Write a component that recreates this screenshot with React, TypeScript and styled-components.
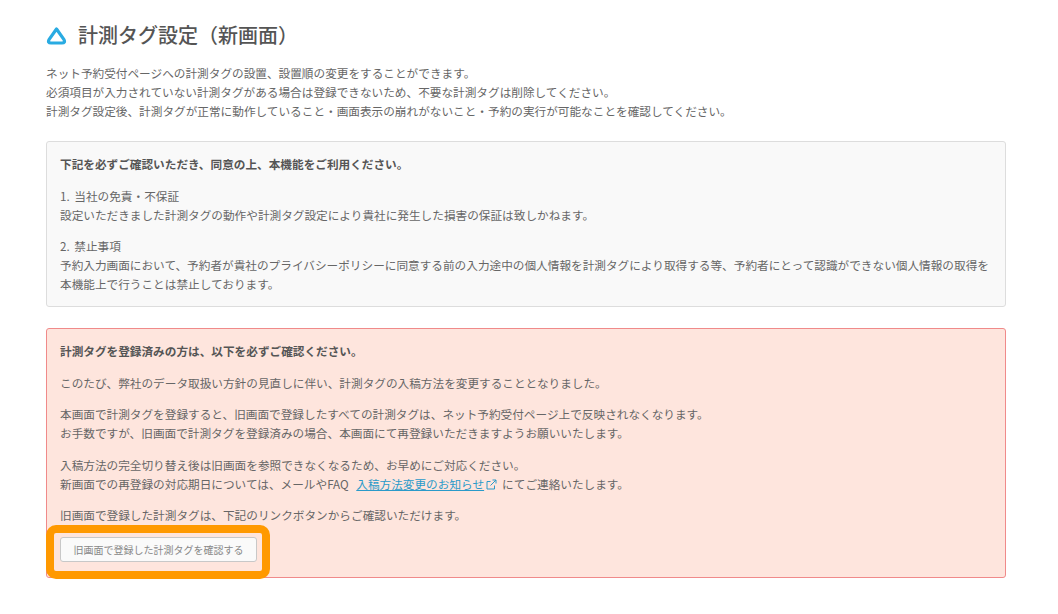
import styled, { createGlobalStyle } from "styled-components";

const GlobalStyle = createGlobalStyle`
  html, body {
    margin: 0;
    padding: 0;
    background: #fff;
  }
  body {
    font-family: "Noto Sans CJK JP", "Liberation Sans", sans-serif;
    color: #666;
  }
`;

const Page = styled.div`
  width: 960px;
  height: 614px;
  overflow: hidden;
  padding: 22px 52px 0 46px;
`;

const TitleRow = styled.div`
  display: flex;
  align-items: center;
  gap: 11px;
  height: 26px;
`;

const TitleIcon = styled.svg`
  margin-top: 2px;
`;

const Title = styled.h1`
  margin: 0;
  font-size: 20px;
  line-height: 26px;
  font-weight: 500;
  color: #555;
`;

const Lead = styled.p`
  margin: 15px 0 0;
  font-size: 11.65px;
  line-height: 19px;
`;

const Box = styled.div<{ $tone: "gray" | "red" }>`
  position: relative;
  box-sizing: border-box;
  margin-top: 21px;
  padding: 12px 13px;
  height: ${(p) => (p.$tone === "gray" ? "166px" : "250px")};
  border: 1px solid ${(p) => (p.$tone === "gray" ? "#ddd" : "#f08a8a")};
  border-radius: 3px;
  background: ${(p) => (p.$tone === "gray" ? "#f9f9f9" : "#fee5dd")};
`;

const Para = styled.p<{ $bold?: boolean }>`
  margin: 0 0 12.5px;
  font-size: 11.65px;
  line-height: 19px;
  font-weight: ${(p) => (p.$bold ? 700 : 400)};
  color: ${(p) => (p.$bold ? "#555" : "#666")};
`;

const Num = styled.span`
  margin-right: 2px;
`;

const InfoLink = styled.a`
  margin-left: 5px;
  color: #2a9ac9;
  text-decoration: underline;
`;

const LinkIcon = styled.svg`
  width: 11px;
  height: 11px;
  margin: 0 5px 0 2px;
  vertical-align: -1px;
`;

const OldButton = styled.button`
  display: block;
  box-sizing: border-box;
  width: 197px;
  height: 25px;
  margin-top: 3px;
  padding: 0;
  border: 1px solid #c8c8c8;
  border-radius: 3px;
  background: #fafafa;
  font-family: inherit;
  font-size: 10px;
  color: #888;
`;

// 注釈の枠
const Highlight = styled.div`
  position: absolute;
  left: -1px;
  bottom: -2px;
  box-sizing: border-box;
  width: 224px;
  height: 54px;
  border: 8px solid #ff9900;
  border-radius: 10px;
`;

export default function App() {
  return (
    <Page>
      <GlobalStyle />
      <TitleRow>
        <TitleIcon width="21" height="18" viewBox="0 0 21 18" fill="none">
          <path
            d="M10.5 2 L18 12.6 Q19.6 16 16 16 L5 16 Q1.4 16 3 12.6 Z"
            stroke="#29abe2"
            strokeWidth="3.2"
            strokeLinejoin="round"
          />
        </TitleIcon>
        <Title>計測タグ設定（新画面）</Title>
      </TitleRow>
      <Lead>
        ネット予約受付ページへの計測タグの設置、設置順の変更をすることができます。
        <br />
        必須項目が入力されていない計測タグがある場合は登録できないため、不要な計測タグは削除してください。
        <br />
        計測タグ設定後、計測タグが正常に動作していること・画面表示の崩れがないこと・予約の実行が可能なことを確認してください。
      </Lead>
      <Box $tone="gray">
        <Para $bold>下記を必ずご確認いただき、同意の上、本機能をご利用ください。</Para>
        <Para>
          <Num>1.</Num> 当社の免責・不保証
          <br />
          設定いただきました計測タグの動作や計測タグ設定により貴社に発生した損害の保証は致しかねます。
        </Para>
        <Para>
          <Num>2.</Num> 禁止事項
          <br />
          予約入力画面において、予約者が貴社のプライバシーポリシーに同意する前の入力途中の個人情報を計測タグにより取得する等、予約者にとって認識ができない個人情報の取得を本機能上で行うことは禁止しております。
        </Para>
      </Box>
      <Box $tone="red">
        <Para $bold>計測タグを登録済みの方は、以下を必ずご確認ください。</Para>
        <Para>このたび、弊社のデータ取扱い方針の見直しに伴い、計測タグの入稿方法を変更することとなりました。</Para>
        <Para>
          本画面で計測タグを登録すると、旧画面で登録したすべての計測タグは、ネット予約受付ページ上で反映されなくなります。
          <br />
          お手数ですが、旧画面で計測タグを登録済みの場合、本画面にて再登録いただきますようお願いいたします。
        </Para>
        <Para>
          入稿方法の完全切り替え後は旧画面を参照できなくなるため、お早めにご対応ください。
          <br />
          新画面での再登録の対応期日については、メールやFAQ <InfoLink>入稿方法変更のお知らせ</InfoLink>
          <LinkIcon viewBox="0 0 11 11" fill="none" stroke="#2a9ac9" strokeWidth="1">
            <path d="M8.5 6.5 V10 H1 V2.5 H4.5" />
            <path d="M4.5 6.5 L10 1 M6.5 1 H10 V4.5" />
          </LinkIcon>
          にてご連絡いたします。
        </Para>
        <Para>旧画面で登録した計測タグは、下記のリンクボタンからご確認いただけます。</Para>
        <OldButton>旧画面で登録した計測タグを確認する</OldButton>
        <Highlight />
      </Box>
    </Page>
  );
}
